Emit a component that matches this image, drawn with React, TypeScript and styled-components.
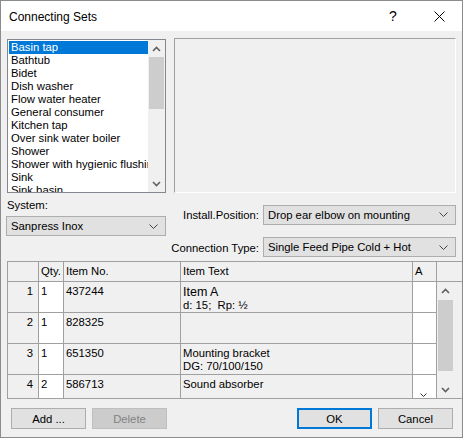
import React from "react";
import styled, { createGlobalStyle, css } from "styled-components";

const GlobalStyle = createGlobalStyle`
  html, body {
    margin: 0;
    padding: 0;
    background: #ffffff;
  }
  * {
    box-sizing: border-box;
  }
`;

const FONT = `"Liberation Sans", Arial, sans-serif`;

const Window = styled.div`
  width: 463px;
  height: 438px;
  border: 1px solid #8c8c8c;
  display: flex;
  flex-direction: column;
  font-family: ${FONT};
  font-size: 11.3px;
  color: #000;
  background: #f0f0f0;
  overflow: hidden;
`;

const TitleBar = styled.div`
  height: 30px;
  background: #ffffff;
  display: flex;
  align-items: center;
  padding-left: 8px;
  flex-shrink: 0;
`;

const Title = styled.div`
  flex: 1;
  font-size: 12px;
  padding-top: 1px;
`;

const CaptionButton = styled.div`
  width: 46px;
  height: 30px;
  display: flex;
  align-items: center;
  justify-content: center;
  font-size: 14px;
`;

const Content = styled.div`
  flex: 1;
  display: flex;
  flex-direction: column;
  padding: 8px 6px 0 6px;
`;

const TopRow = styled.div`
  display: grid;
  grid-template-columns: 159px 1fr;
  column-gap: 8px;
  height: 154px;
`;

const ListBox = styled.div`
  border: 1px solid #828790;
  background: #ffffff;
  display: flex;
  overflow: hidden;
`;

const ListItems = styled.div`
  flex: 1;
  padding: 1px 0 0 1px;
  overflow: hidden;
`;

const ListItem = styled.div<{ selected?: boolean }>`
  height: 13px;
  line-height: 13px;
  padding-left: 2px;
  white-space: nowrap;
  overflow: hidden;
  ${({ selected }) =>
    selected &&
    css`
      background: #0078d7;
      color: #ffffff;
    `}
`;

const Scrollbar = styled.div<{ thumbTop: number; thumbHeight: number }>`
  width: 17px;
  background: #f0f0f0;
  position: relative;
  flex-shrink: 0;
  display: flex;
  flex-direction: column;
  justify-content: space-between;

  &::before {
    content: "";
    position: absolute;
    left: 1px;
    right: 1px;
    top: ${({ thumbTop }) => thumbTop}px;
    height: ${({ thumbHeight }) => thumbHeight}px;
    background: #cdcdcd;
  }
`;

const ArrowCell = styled.div`
  height: 17px;
  display: flex;
  align-items: center;
  justify-content: center;
`;

const Preview = styled.div`
  margin-top: -1px;
  border-top: 1px solid #a0a0a0;
  border-left: 1px solid #a0a0a0;
  border-right: 1px solid #ffffff;
  border-bottom: 1px solid #ffffff;
`;

const MidRow = styled.div`
  display: flex;
  height: 67px;
`;

const SystemColumn = styled.div`
  width: 160px;
  margin-left: -1px;
  display: flex;
  flex-direction: column;
`;

const FieldLabel = styled.div`
  margin-top: 5px;
  margin-left: 1px;
  height: 14px;
  line-height: 14px;
`;

const Combo = styled.div<{ wide?: boolean }>`
  height: 20px;
  border: 1px solid #adadad;
  background: #e1e1e1;
  display: flex;
  align-items: center;
  padding: 0 7px 0 4px;
  margin-top: ${({ wide }) => (wide ? 0 : 4)}px;

  span {
    flex: 1;
    white-space: nowrap;
  }
`;

const PositionGrid = styled.div`
  margin-left: auto;
  padding-top: 9px;
  display: grid;
  grid-template-columns: auto 193px;
  column-gap: 4px;
  row-gap: 7px;
  align-items: center;
`;

const RightLabel = styled.div`
  text-align: right;
  white-space: nowrap;
  padding-top: 1px;
`;

const GridArea = styled.div`
  display: flex;
  height: 138px;
  margin-top: 1px;
  margin-right: -7px;
  border-top: 1px solid #a0a0a0;
  border-bottom: 1px solid #a0a0a0;
  border-left: 1px solid #a0a0a0;
  overflow: hidden;
`;

const Table = styled.div`
  display: grid;
  grid-template-columns: 31px 25px 117px 232px 24px;
  grid-template-rows: 20px 31px 31px 31px 31px;
  align-content: start;
`;

const Cell = styled.div<{ white?: boolean; align?: string }>`
  border-right: 1px solid #a0a0a0;
  border-bottom: 1px solid #a0a0a0;
  background: ${({ white }) => (white ? "#ffffff" : "#f0f0f0")};
  text-align: ${({ align }) => align || "left"};
  padding: 3px 2px 0 2px;
  padding-right: ${({ align }) => (align === "right" ? "5px" : "2px")};
  line-height: 13px;
  white-space: pre;
  overflow: hidden;
  position: relative;
`;

const BigLine = styled.div`
  font-size: 12.5px;
  line-height: 14px;
`;

const CellChevron = styled.div`
  position: absolute;
  left: 7px;
  bottom: 5px;
`;

const ScrollColumn = styled.div`
  flex: 1;
  display: flex;
  flex-direction: column;
`;

const ScrollHeader = styled.div`
  height: 20px;
  border-bottom: 1px solid #a0a0a0;
  flex-shrink: 0;
`;

const ScrollBody = styled.div`
  flex: 1;
  display: flex;
`;

const Footer = styled.div`
  display: flex;
  padding: 9px 3px 0 4px;
  gap: 6px;
`;

const Button = styled.div<{ disabled?: boolean; primary?: boolean }>`
  width: 75px;
  height: 21px;
  display: flex;
  align-items: center;
  justify-content: center;
  background: #e1e1e1;
  border: 1px solid #adadad;
  ${({ primary }) =>
    primary &&
    css`
      border: 2px solid #0078d7;
      margin-left: auto;
    `}
  ${({ disabled }) =>
    disabled &&
    css`
      background: #cccccc;
      border-color: #bfbfbf;
      color: #838383;
    `}
`;

const ChevronDown = ({ color = "#444" }: { color?: string }) => (
  <svg width="9" height="5" viewBox="0 0 9 5">
    <path d="M0.5 0.5 L4.5 4.5 L8.5 0.5" fill="none" stroke={color} strokeWidth="1" />
  </svg>
);

const ScrollArrow = ({ up }: { up?: boolean }) => (
  <svg width="9" height="6" viewBox="0 0 9 6">
    <path
      d={up ? "M1 5 L4.5 1.5 L8 5" : "M1 1 L4.5 4.5 L8 1"}
      fill="none"
      stroke="#606060"
      strokeWidth="1.6"
    />
  </svg>
);

const items = [
  "Basin tap",
  "Bathtub",
  "Bidet",
  "Dish washer",
  "Flow water heater",
  "General consumer",
  "Kitchen tap",
  "Over sink water boiler",
  "Shower",
  "Shower with hygienic flushing",
  "Sink",
  "Sink basin",
];

const rows = [
  { n: "1", qty: "1", no: "437244", text: ["Item A", "d: 15;  Rp: ½"] },
  { n: "2", qty: "1", no: "828325", text: [] },
  { n: "3", qty: "1", no: "651350", text: ["Mounting bracket", "DG: 70/100/150"] },
  { n: "4", qty: "2", no: "586713", text: ["Sound absorber"] },
];

export default function App() {
  return (
    <>
      <GlobalStyle />
      <Window>
        <TitleBar>
          <Title>Connecting Sets</Title>
          <CaptionButton>?</CaptionButton>
          <CaptionButton>
            <svg width="11" height="11" viewBox="0 0 11 11">
              <path d="M0.5 0.5 L10.5 10.5 M10.5 0.5 L0.5 10.5" stroke="#000" strokeWidth="1" />
            </svg>
          </CaptionButton>
        </TitleBar>
        <Content>
          <TopRow>
            <ListBox>
              <ListItems>
                {items.map((it, i) => (
                  <ListItem key={it} selected={i === 0}>
                    {it}
                  </ListItem>
                ))}
              </ListItems>
              <Scrollbar thumbTop={17} thumbHeight={52}>
                <ArrowCell>
                  <ScrollArrow up />
                </ArrowCell>
                <ArrowCell>
                  <ScrollArrow />
                </ArrowCell>
              </Scrollbar>
            </ListBox>
            <Preview />
          </TopRow>
          <MidRow>
            <SystemColumn>
              <FieldLabel>System:</FieldLabel>
              <Combo>
                <span>Sanpress Inox</span>
                <ChevronDown />
              </Combo>
            </SystemColumn>
            <PositionGrid>
              <RightLabel>Install.Position:</RightLabel>
              <Combo wide>
                <span>Drop ear elbow on mounting</span>
                <ChevronDown />
              </Combo>
              <RightLabel>Connection Type:</RightLabel>
              <Combo wide>
                <span>Single Feed Pipe Cold + Hot</span>
                <ChevronDown />
              </Combo>
            </PositionGrid>
          </MidRow>
          <GridArea>
            <Table>
              <Cell />
              <Cell>Qty.</Cell>
              <Cell>Item No.</Cell>
              <Cell>Item Text</Cell>
              <Cell>A</Cell>
              {rows.map((r, i) => (
                <React.Fragment key={r.n}>
                  <Cell align="right">{r.n}</Cell>
                  <Cell white>{r.qty}</Cell>
                  <Cell>{r.no}</Cell>
                  <Cell>
                    {r.text.map((t, j) =>
                      j === 0 && i === 0 ? <BigLine key={t}>{t}</BigLine> : <div key={t}>{t}</div>
                    )}
                  </Cell>
                  <Cell white>
                    {i === rows.length - 1 && (
                      <CellChevron>
                        <svg width="7" height="4" viewBox="0 0 7 4">
                          <path d="M0.5 0.5 L3.5 3.5 L6.5 0.5" fill="none" stroke="#333" strokeWidth="1" />
                        </svg>
                      </CellChevron>
                    )}
                  </Cell>
                </React.Fragment>
              ))}
            </Table>
            <ScrollColumn>
              <ScrollHeader />
              <ScrollBody>
                <Scrollbar thumbTop={18} thumbHeight={71} style={{ flex: "none" }}>
                  <ArrowCell>
                    <ScrollArrow up />
                  </ArrowCell>
                  <ArrowCell>
                    <ScrollArrow />
                  </ArrowCell>
                </Scrollbar>
              </ScrollBody>
            </ScrollColumn>
          </GridArea>
          <Footer>
            <Button>Add ...</Button>
            <Button disabled>Delete</Button>
            <Button primary>OK</Button>
            <Button>Cancel</Button>
          </Footer>
        </Content>
      </Window>
    </>
  );
}
